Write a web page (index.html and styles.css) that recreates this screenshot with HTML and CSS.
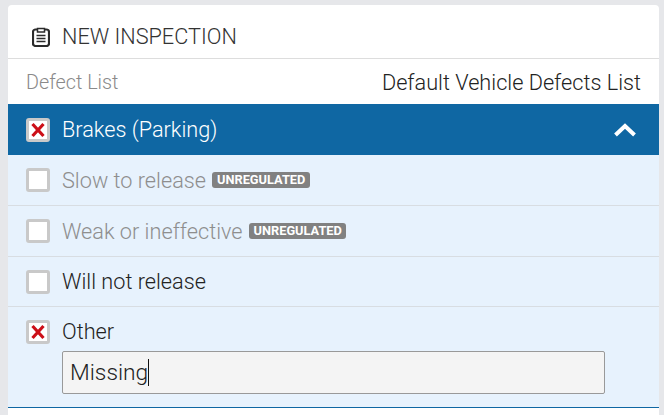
FILE: index.html
```html
<!DOCTYPE html>
<html lang="en">
  <head>
    <meta charset="UTF-8" />
    <title>New Inspection</title>
    <link rel="stylesheet" href="styles.css">
  </head>
  <body>
    <div class="card">
      <div class="title">
        <svg class="title-icon" viewBox="0 0 18 20" width="18" height="20">
          <rect x="1" y="2.500" width="16" height="16.500" rx="2.500" fill="none" stroke="#2b2b2b" stroke-width="2.200" />
          <path d="M5.500 1.500h7v3.500h-7z" fill="#fff" stroke="#2b2b2b" stroke-width="1.500" />
          <path d="M4.500 8.500h9M4.500 11.500h9M4.500 14.500h9" stroke="#2b2b2b" stroke-width="1.300" />
        </svg>
        <span>NEW INSPECTION</span>
      </div>
      <div class="list-row">
        <span class="list-label">Defect List</span>
        <span class="list-value">Default Vehicle Defects List</span>
      </div>
      <div class="group">
        <span class="check">
          <svg viewBox="0 0 18 18" width="18" height="18"><path d="M3.500 3l11 12M14.500 3l-11 12" stroke="#cc0f18" stroke-width="3.200" /></svg>
        </span>
        <span class="group-name">Brakes (Parking)</span>
        <svg class="chevron" viewBox="0 0 24 16" width="24" height="16"><path d="M2.500 13L12 4l9.500 9" fill="none" stroke="#fff" stroke-width="4" /></svg>
      </div>
      <div class="item muted">
        <span class="check"></span>
        <span>Slow to release</span>
        <span class="badge">UNREGULATED</span>
      </div>
      <div class="item muted">
        <span class="check"></span>
        <span>Weak or ineffective</span>
        <span class="badge">UNREGULATED</span>
      </div>
      <div class="item">
        <span class="check"></span>
        <span>Will not release</span>
      </div>
      <div class="item other">
        <span class="check">
          <svg viewBox="0 0 18 18" width="18" height="18"><path d="M3.500 3l11 12M14.500 3l-11 12" stroke="#cc0f18" stroke-width="3.200" /></svg>
        </span>
        <div class="other-body">
          <div class="other-label">Other</div>
          <div class="text-box">Missing<span class="caret"></span></div>
        </div>
      </div>
    </div>
  </body>
</html>
```

FILE: styles.css
```css
* {
  margin: 0;
  padding: 0;
  box-sizing: border-box;
}

body {
  height: 415px;
  overflow: hidden;
  padding: 5px 5px 0 8px;
  background: #e6e7ea;
  font-family: Roboto, "Liberation Sans", sans-serif;
  font-weight: 300;
  color: #222;
}

.card {
  height: 410px;
  background: #fff;
  border-radius: 4px 4px 0 0;
  overflow: hidden;
}

.title {
  display: flex;
  align-items: center;
  gap: 12px;
  height: 54px;
  padding: 10px 0 0 24px;
  border-bottom: 1px solid #ddd;
  font-size: 21.7px;
  color: #333;
}

.list-row {
  display: flex;
  justify-content: space-between;
  align-items: center;
  height: 45px;
  padding: 1px 18px 0;
  font-size: 21.7px;
}

.list-label {
  font-size: 19.8px;
  color: #8a8a8a;
}

.group {
  display: flex;
  align-items: center;
  gap: 12px;
  height: 51px;
  padding: 0 22px 0 18px;
  background: #0f67a3;
  color: #fff;
  font-size: 21.7px;
}

.group-name {
  flex: 1;
}

.check {
  display: flex;
  align-items: center;
  justify-content: center;
  flex: none;
  width: 24px;
  height: 24px;
  background: #fff;
  border: 3px solid #c9c9c9;
  border-radius: 3px;
}

.item {
  display: flex;
  align-items: center;
  gap: 12px;
  height: 50.8px;
  padding: 1px 18px 0;
  background: #e7f2fd;
  border-bottom: 1px solid #d8dde2;
  font-size: 21.7px;
}

.muted {
  color: #8e8e8e;
}

.badge {
  margin-left: -5.500px;
  padding: 0 4.500px;
  background: #818181;
  border-radius: 3px;
  color: #fff;
  font-size: 12.800px;
  font-weight: 700;
  line-height: 16px;
}

.other {
  align-items: flex-start;
  height: 100.600px;
  padding-top: 13px;
  border-bottom: 1px solid #0f67a3;
}

.other-body {
  flex: 1;
}

.other-label {
  margin-top: -1px;
}

.text-box {
  display: flex;
  align-items: center;
  width: 543px;
  height: 43px;
  margin-top: 7px;
  padding-left: 7px;
  background: #f4f4f4;
  border: 1px solid #999;
  border-radius: 2px;
  font-size: 22.800px;
}

.caret {
  width: 1px;
  height: 27px;
  background: #111;
}
```
